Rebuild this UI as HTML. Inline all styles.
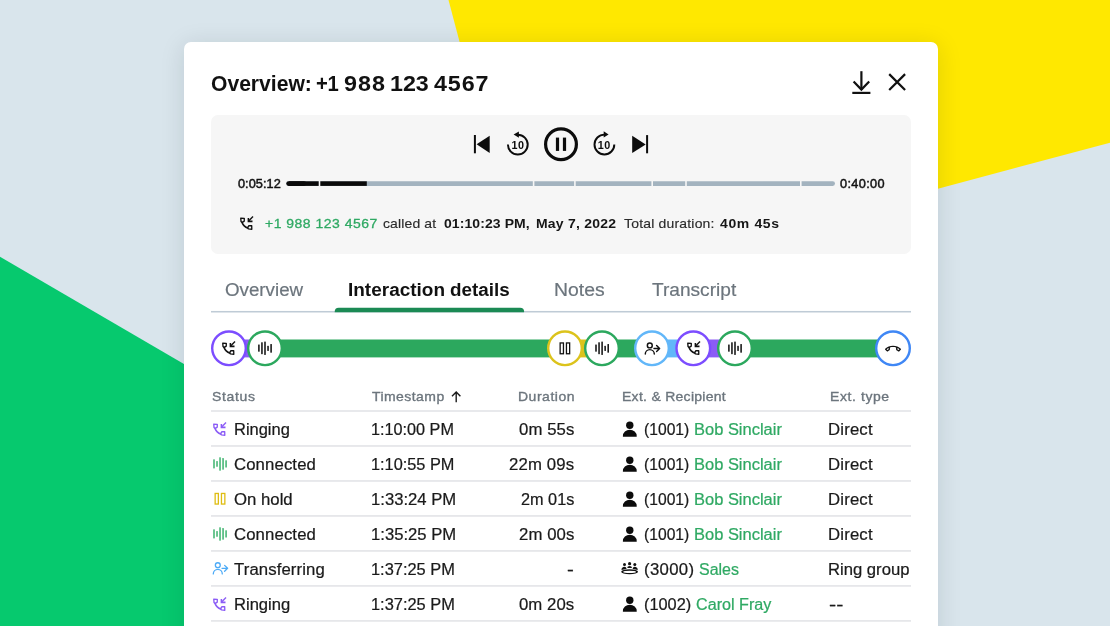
<!DOCTYPE html><html><head><meta charset="utf-8"><title>Overview</title><style>
html,body{margin:0;padding:0}
body{width:1110px;height:626px;overflow:hidden;position:relative;background:#d9e5ec;font-family:'Liberation Sans', sans-serif;}
.a{position:absolute}
.t{position:absolute;white-space:pre;margin:0}
svg{position:absolute;overflow:visible}

</style></head><body><div id="root" style="position:absolute;left:0;top:0;width:1110px;height:626px;will-change:transform">
<svg class="a" style="left:0;top:0" width="1110" height="626" viewBox="0 0 1110 626">
<polygon points="448.5,0 1110,0 1110,142.7 527.4,298.7" fill="#ffe800"/>
<polygon points="0,256.8 640,629.9 640,640 0,640" fill="#06c96e"/>
</svg>
<div class="a" style="left:184px;top:42px;width:754px;height:640px;background:#fff;border-radius:7px;box-shadow:0 3px 24px rgba(10,30,40,0.125)"></div>
<div class="a" style="left:211px;top:115px;width:700px;height:138.7px;background:#f6f6f6;border-radius:7px"></div>
<svg style="left:0;top:0" width="1110" height="626" viewBox="0 0 1110 626" fill="none" stroke="#111" stroke-width="2.2" stroke-linecap="butt" stroke-linejoin="miter">
<path d="M861.4 71.2V89.6"/><path d="M853.6 81.6L861.4 89.6L869.2 81.6"/><path d="M852.3 92.9H870.4"/>
<path d="M889.2 74.1L905.1 90M905.1 74.1L889.2 90"/>
</svg>
<svg style="left:0;top:0" width="1110" height="626" viewBox="0 0 1110 626">
<g fill="#0c0c0c">
<rect x="473.9" y="135" width="2" height="18.3"/>
<polygon points="476.6,144.2 489.7,135.8 489.7,152.9"/>
<polygon points="632.2,135.7 632.2,153.1 645.7,144.4"/>
<rect x="646.1" y="135.1" width="2" height="18.2"/>
<rect x="555.9" y="137.6" width="3.2" height="13.3"/>
<rect x="562.9" y="137.6" width="3.2" height="13.3"/>
<polygon points="513.6,134.6 518.9,131.4 518.9,137.8"/>
<polygon points="608.6,134.4 603.7,131.2 603.7,137.6"/>
</g>
<circle cx="561" cy="144.3" r="15.4" fill="none" stroke="#0c0c0c" stroke-width="3.2"/>
<path d="M517.8 134.7A9.9 9.9 0 1 1 507.9 144.6" fill="none" stroke="#0c0c0c" stroke-width="1.95"/>
<path d="M604.4 134.6A9.9 9.9 0 1 0 614.3 144.5" fill="none" stroke="#0c0c0c" stroke-width="1.95"/>
</svg>
<div class="t" style="left:511.4px;top:138.8px;font-size:10.8px;line-height:12px;font-weight:700;letter-spacing:0.5px;color:#0c0c0c">10</div>
<div class="t" style="left:597.8px;top:138.6px;font-size:10.8px;line-height:12px;font-weight:700;letter-spacing:0.5px;color:#0c0c0c">10</div>
<svg style="left:0;top:0" width="1110" height="626" viewBox="0 0 1110 626"><rect x="286.3" y="181.3" width="548.7" height="4.6" rx="2.3" fill="#a3b3bf"/><rect x="286.3" y="181.3" width="20" height="4.6" rx="2.3" fill="#0a0a0a"/><rect x="289" y="181.3" width="77.8" height="4.6" fill="#0a0a0a"/><rect x="318.7" y="180.8" width="1.6" height="5.6" fill="#f6f6f6"/><rect x="532.8" y="180.8" width="1.6" height="5.6" fill="#f6f6f6"/><rect x="574.1" y="180.8" width="1.6" height="5.6" fill="#f6f6f6"/><rect x="651.4" y="180.8" width="1.6" height="5.6" fill="#f6f6f6"/><rect x="685.2" y="180.8" width="1.6" height="5.6" fill="#f6f6f6"/><rect x="800.0" y="180.8" width="1.6" height="5.6" fill="#f6f6f6"/></svg>
<svg style="left:238.20px;top:216.40px" width="16" height="16" viewBox="0 0 16 16" fill="none" stroke="#111"><path d="M2.75 2.2L6.3 2.3L6.25 5.1L4.7 6.3L3.05 5.6Z" stroke-width="1.35" stroke-linejoin="round"/><path d="M13.8 13.25L13.7 9.7L10.9 9.75L9.7 11.3L10.4 12.95Z" stroke-width="1.35" stroke-linejoin="round"/><path d="M3.7 5.9A11.5 11.5 0 0 0 10.1 12.3" stroke-width="1.5"/><path d="M15 0.55L10.9 4.65" stroke-width="1.4"/><path d="M10.4 1.9V5.35H14.5" stroke-width="1.55"/></svg>
<svg style="left:0;top:0" width="1110" height="626" viewBox="0 0 1110 626"><rect x="211" y="310.95" width="700" height="1.55" fill="#bfcbd6"/><path d="M334.7 312.3V311.700A4 4 0 0 1 338.7 307.700H520.100A4 4 0 0 1 524.100 311.700V312.300Z" fill="#1b8a54"/></svg>
<svg style="left:0;top:0" width="1110" height="626" viewBox="0 0 1110 626"><rect x="229" y="339.5" width="36.5" height="17.9" fill="#8b5cf6"/><rect x="265" y="339.5" width="300.5" height="17.9" fill="#2ca85e"/><rect x="565" y="339.5" width="37.5" height="17.9" fill="#dcc31c"/><rect x="602" y="339.5" width="50.5" height="17.9" fill="#2ca85e"/><rect x="652" y="339.5" width="41.799999999999955" height="17.9" fill="#62b7f9"/><rect x="693.3" y="339.5" width="42.200000000000045" height="17.9" fill="#8b5cf6"/><rect x="735" y="339.5" width="158.5" height="17.9" fill="#2ca85e"/></svg>
<svg style="left:0;top:0" width="1110" height="626" viewBox="0 0 1110 626">
<circle cx="229" cy="348.3" r="16.8" fill="#fff" stroke="#7c4dff" stroke-width="2.4"/>
<circle cx="265" cy="348.3" r="16.8" fill="#fff" stroke="#2ca85e" stroke-width="2.4"/>
<circle cx="565" cy="348.3" r="16.8" fill="#fff" stroke="#dcc31c" stroke-width="2.4"/>
<circle cx="602" cy="348.3" r="16.8" fill="#fff" stroke="#2ca85e" stroke-width="2.4"/>
<circle cx="652" cy="348.3" r="16.8" fill="#fff" stroke="#62b7f9" stroke-width="2.4"/>
<circle cx="693.3" cy="348.3" r="16.8" fill="#fff" stroke="#7c4dff" stroke-width="2.4"/>
<circle cx="735" cy="348.3" r="16.8" fill="#fff" stroke="#2ca85e" stroke-width="2.4"/>
<circle cx="893" cy="348.3" r="16.8" fill="#fff" stroke="#3f87f5" stroke-width="2.4"/>
<rect x="258.10" y="344.40" width="1.6" height="7.35" rx="0.4" fill="#1a1a1a"/><rect x="261.15" y="342.20" width="1.6" height="11.95" rx="0.4" fill="#1a1a1a"/><rect x="264.20" y="341.50" width="1.6" height="13.45" rx="0.4" fill="#1a1a1a"/><rect x="267.25" y="345.75" width="1.6" height="5.25" rx="0.4" fill="#1a1a1a"/><rect x="270.30" y="343.90" width="1.6" height="8.80" rx="0.4" fill="#1a1a1a"/>
<rect x="595.20" y="344.40" width="1.6" height="7.35" rx="0.4" fill="#1a1a1a"/><rect x="598.25" y="342.20" width="1.6" height="11.95" rx="0.4" fill="#1a1a1a"/><rect x="601.30" y="341.50" width="1.6" height="13.45" rx="0.4" fill="#1a1a1a"/><rect x="604.35" y="345.75" width="1.6" height="5.25" rx="0.4" fill="#1a1a1a"/><rect x="607.40" y="343.90" width="1.6" height="8.80" rx="0.4" fill="#1a1a1a"/>
<rect x="728.10" y="344.40" width="1.6" height="7.35" rx="0.4" fill="#1a1a1a"/><rect x="731.15" y="342.20" width="1.6" height="11.95" rx="0.4" fill="#1a1a1a"/><rect x="734.20" y="341.50" width="1.6" height="13.45" rx="0.4" fill="#1a1a1a"/><rect x="737.25" y="345.75" width="1.6" height="5.25" rx="0.4" fill="#1a1a1a"/><rect x="740.30" y="343.90" width="1.6" height="8.80" rx="0.4" fill="#1a1a1a"/>
<g fill="none" stroke="#111" stroke-width="1.3"><rect x="560.15" y="342.95" width="3.3" height="10.8"/><rect x="566.45" y="342.95" width="3.2" height="10.8"/></g>
<g transform="translate(432,-219.8)" fill="none" stroke="#111" stroke-width="1.45" stroke-linecap="round" stroke-linejoin="round"><circle cx="217.8" cy="565.2" r="2.45"/><path d="M213.3 573.9A4.5 4.5 0 0 1 222.3 573.9"/><path d="M222 568.3H227.5M224.6 565.4L227.6 568.3L224.6 571.2"/></g>
</svg>
<svg style="left:220.20px;top:340.80px" width="16" height="16" viewBox="0 0 16 16" fill="none" stroke="#111"><path d="M2.75 2.2L6.3 2.3L6.25 5.1L4.7 6.3L3.05 5.6Z" stroke-width="1.35" stroke-linejoin="round"/><path d="M13.8 13.25L13.7 9.7L10.9 9.75L9.7 11.3L10.4 12.95Z" stroke-width="1.35" stroke-linejoin="round"/><path d="M3.7 5.9A11.5 11.5 0 0 0 10.1 12.3" stroke-width="1.5"/><path d="M15 0.55L10.9 4.65" stroke-width="1.4"/><path d="M10.4 1.9V5.35H14.5" stroke-width="1.55"/></svg>
<svg style="left:684.50px;top:340.80px" width="16" height="16" viewBox="0 0 16 16" fill="none" stroke="#111"><path d="M2.75 2.2L6.3 2.3L6.25 5.1L4.7 6.3L3.05 5.6Z" stroke-width="1.35" stroke-linejoin="round"/><path d="M13.8 13.25L13.7 9.7L10.9 9.75L9.7 11.3L10.4 12.95Z" stroke-width="1.35" stroke-linejoin="round"/><path d="M3.7 5.9A11.5 11.5 0 0 0 10.1 12.3" stroke-width="1.5"/><path d="M15 0.55L10.9 4.65" stroke-width="1.4"/><path d="M10.4 1.9V5.35H14.5" stroke-width="1.55"/></svg>
<svg style="left:885px;top:340.5px" width="16" height="16" viewBox="0 0 24 24"><path d="M18.59 10.52c1.05.51 2.04 1.15 2.96 1.91l-1.07 1.07c-.58-.47-1.21-.89-1.88-1.27v-1.71m-13.2 0v1.7c-.65.37-1.28.79-1.87 1.27l-1.07-1.07c.91-.75 1.9-1.38 2.94-1.9M12 7C7.46 7 3.34 8.78.29 11.67c-.18.18-.29.43-.29.71s.11.53.29.7l2.48 2.48c.18.18.43.29.71.29.27 0 .52-.1.7-.28.79-.73 1.68-1.36 2.66-1.85.33-.16.56-.51.56-.9v-3.1C8.85 9.25 10.4 9 12 9s3.150.25 4.59.73v3.1c0 .4.23.74.56.9.98.49 1.88 1.11 2.67 1.85.18.17.43.28.7.28.28 0 .53-.11.71-.29l2.48-2.48c.18-.18.29-.43.29-.71s-.11-.53-.29-.71C20.66 8.78 16.540 7 12 7z" fill="#111"/></svg>
<svg style="left:0;top:0" width="1110" height="626" viewBox="0 0 1110 626"><rect x="211" y="410.10" width="700" height="1.8" fill="#e6e7ea"/><rect x="211" y="445.08" width="700" height="1.8" fill="#e6e7ea"/><rect x="211" y="480.06" width="700" height="1.8" fill="#e6e7ea"/><rect x="211" y="515.04" width="700" height="1.8" fill="#e6e7ea"/><rect x="211" y="550.02" width="700" height="1.8" fill="#e6e7ea"/><rect x="211" y="585.00" width="700" height="1.8" fill="#e6e7ea"/><rect x="211" y="619.98" width="700" height="1.8" fill="#e6e7ea"/></svg>
<svg style="left:0;top:0" width="1110" height="626" viewBox="0 0 1110 626" fill="none" stroke="#1a1a1a" stroke-width="1.4"><path d="M456.2 402.3V392.3M452 396.3L456.2 392.1L460.4 396.3"/></svg>
<svg style="left:0;top:0" width="1110" height="626" viewBox="0 0 1110 626">
<rect x="213.25" y="459.30" width="1.5" height="9.10" rx="0.4" fill="#3db36e"/><rect x="216.27" y="461.10" width="1.5" height="5.70" rx="0.4" fill="#3db36e"/><rect x="219.29" y="457.20" width="1.5" height="13.50" rx="0.4" fill="#3db36e"/><rect x="222.31" y="458.10" width="1.5" height="11.60" rx="0.4" fill="#3db36e"/><rect x="225.33" y="460.20" width="1.5" height="7.40" rx="0.4" fill="#3db36e"/>
<rect x="213.25" y="529.30" width="1.5" height="9.10" rx="0.4" fill="#3db36e"/><rect x="216.27" y="531.10" width="1.5" height="5.70" rx="0.4" fill="#3db36e"/><rect x="219.29" y="527.20" width="1.5" height="13.50" rx="0.4" fill="#3db36e"/><rect x="222.31" y="528.10" width="1.5" height="11.60" rx="0.4" fill="#3db36e"/><rect x="225.33" y="530.20" width="1.5" height="7.40" rx="0.4" fill="#3db36e"/>
<g fill="none" stroke="#dfbd12" stroke-width="1.3"><rect x="215.15" y="493.45" width="3.2" height="10.6"/><rect x="221.45" y="493.45" width="3.4" height="10.6"/></g>
<g transform="translate(0,0)" fill="none" stroke="#4dabf7" stroke-width="1.3" stroke-linecap="round" stroke-linejoin="round"><circle cx="217.8" cy="565.2" r="2.45"/><path d="M213.3 573.9A4.5 4.5 0 0 1 222.3 573.9"/><path d="M222 568.3H227.5M224.6 565.4L227.6 568.3L224.6 571.2"/></g>
<circle cx="629.8" cy="425.25" r="3.7" fill="#0c0c0c"/><path d="M622.9 436.80V436.10A6.9 6.35 0 0 1 636.7 436.10V436.80Z" fill="#0c0c0c"/>
<circle cx="629.8" cy="460.25" r="3.7" fill="#0c0c0c"/><path d="M622.9 471.80V471.10A6.9 6.35 0 0 1 636.7 471.10V471.80Z" fill="#0c0c0c"/>
<circle cx="629.8" cy="495.25" r="3.7" fill="#0c0c0c"/><path d="M622.9 506.80V506.10A6.9 6.35 0 0 1 636.7 506.10V506.80Z" fill="#0c0c0c"/>
<circle cx="629.8" cy="530.25" r="3.7" fill="#0c0c0c"/><path d="M622.9 541.80V541.10A6.9 6.35 0 0 1 636.7 541.10V541.80Z" fill="#0c0c0c"/>
<circle cx="629.8" cy="600.25" r="3.7" fill="#0c0c0c"/><path d="M622.9 611.80V611.10A6.9 6.35 0 0 1 636.7 611.10V611.80Z" fill="#0c0c0c"/>
<g fill="#111"><circle cx="624.5" cy="564.5" r="1.5"/><circle cx="629.6" cy="563.7" r="1.6"/><circle cx="634.8" cy="564.5" r="1.5"/>
<path d="M621.5 569.6A2.700 2.700 0 0 1 626.4 567.9L626.400 568.9Q623.8 569.1 621.5 570.1Z"/>
<path d="M637.7 569.6A2.700 2.700 0 0 0 632.8 567.9L632.800 568.9Q635.4 569.1 637.7 570.1Z"/>
<path d="M627.2 567.9A2.400 1.9 0 0 1 632 567.9Z"/>
<path fill-rule="evenodd" d="M621.2 571.8A8.4 2.5 0 1 0 638 571.8A8.4 2.5 0 1 0 621.2 571.8ZM623.2 571.9A6.4 1.15 0 1 0 636 571.9A6.4 1.15 0 1 0 623.2 571.9Z"/></g>
</svg>
<svg style="left:211.10px;top:421.80px" width="16" height="16" viewBox="0 0 16 16" fill="none" stroke="#8b5cf6"><path d="M2.75 2.2L6.3 2.3L6.25 5.1L4.7 6.3L3.05 5.6Z" stroke-width="1.35" stroke-linejoin="round"/><path d="M13.8 13.25L13.7 9.7L10.9 9.75L9.7 11.3L10.4 12.95Z" stroke-width="1.35" stroke-linejoin="round"/><path d="M3.7 5.9A11.5 11.5 0 0 0 10.1 12.3" stroke-width="1.5"/><path d="M15 0.55L10.9 4.65" stroke-width="1.4"/><path d="M10.4 1.9V5.35H14.5" stroke-width="1.55"/></svg>
<svg style="left:211.10px;top:596.80px" width="16" height="16" viewBox="0 0 16 16" fill="none" stroke="#8b5cf6"><path d="M2.75 2.2L6.3 2.3L6.25 5.1L4.7 6.3L3.05 5.6Z" stroke-width="1.35" stroke-linejoin="round"/><path d="M13.8 13.25L13.7 9.7L10.9 9.75L9.7 11.3L10.4 12.95Z" stroke-width="1.35" stroke-linejoin="round"/><path d="M3.7 5.9A11.5 11.5 0 0 0 10.1 12.3" stroke-width="1.5"/><path d="M15 0.55L10.9 4.65" stroke-width="1.4"/><path d="M10.4 1.9V5.35H14.5" stroke-width="1.55"/></svg>
<div class="t" style="left:210.75px;top:70.58px;font-size:22px;line-height:26.4px;font-weight:700;color:#111;letter-spacing:0.000px;transform-origin:0 0;transform:scaleX(0.9586);">Overview:</div>
<div class="t" style="left:316.10px;top:70.58px;font-size:22px;line-height:26.4px;font-weight:700;color:#111;letter-spacing:-0.426px;transform-origin:0 0;transform:scaleX(0.92);">+1</div>
<div class="t" style="left:344.19px;top:70.58px;font-size:22px;line-height:26.4px;font-weight:700;color:#111;letter-spacing:1.019px;transform-origin:0 0;transform:scaleX(1.06);">988</div>
<div class="t" style="left:390.38px;top:70.58px;font-size:22px;line-height:26.4px;font-weight:700;color:#111;letter-spacing:0.000px;transform-origin:0 0;transform:scaleX(1.0567);">123</div>
<div class="t" style="left:433.79px;top:70.58px;font-size:22px;line-height:26.4px;font-weight:700;color:#111;letter-spacing:0.799px;transform-origin:0 0;transform:scaleX(1.06);">4567</div>
<div class="t" style="left:237.95px;top:176.64px;font-size:12px;line-height:14.4px;font-weight:400;color:#111;letter-spacing:0.044px;transform-origin:0 0;transform:scaleX(1.06);-webkit-text-stroke:0.45px #111;">0:05:12</div>
<div class="t" style="left:840.15px;top:176.64px;font-size:12px;line-height:14.4px;font-weight:400;color:#111;letter-spacing:0.326px;transform-origin:0 0;transform:scaleX(1.06);-webkit-text-stroke:0.45px #111;">0:40:00</div>
<div class="t" style="left:264.82px;top:215.93px;font-size:13.2px;line-height:15.8px;font-weight:400;color:#2fa963;letter-spacing:0.467px;transform-origin:0 0;transform:scaleX(1.06);-webkit-text-stroke:0.3px #2fa963;">+1 988 123 4567</div>
<div class="t" style="left:383.10px;top:215.93px;font-size:13.2px;line-height:15.8px;font-weight:400;color:#2a2a2a;letter-spacing:0.123px;transform-origin:0 0;transform:scaleX(1.06);-webkit-text-stroke:0.15px #2a2a2a;">called at</div>
<div class="t" style="left:443.99px;top:215.93px;font-size:13.2px;line-height:15.8px;font-weight:700;color:#161616;letter-spacing:0.084px;transform-origin:0 0;transform:scaleX(1.06);">01:10:23 PM,</div>
<div class="t" style="left:536.12px;top:215.93px;font-size:13.2px;line-height:15.8px;font-weight:700;color:#161616;letter-spacing:0.215px;transform-origin:0 0;transform:scaleX(1.06);">May 7, 2022</div>
<div class="t" style="left:623.67px;top:215.93px;font-size:13.2px;line-height:15.8px;font-weight:400;color:#2a2a2a;letter-spacing:0.179px;transform-origin:0 0;transform:scaleX(1.06);-webkit-text-stroke:0.15px #2a2a2a;">Total duration:</div>
<div class="t" style="left:719.50px;top:215.93px;font-size:13.2px;line-height:15.8px;font-weight:700;color:#161616;letter-spacing:0.610px;transform-origin:0 0;transform:scaleX(1.06);">40m 45s</div>
<div class="t" style="left:224.54px;top:278.86px;font-size:18.3px;line-height:22.0px;font-weight:400;color:#6c757d;letter-spacing:0.000px;transform-origin:0 0;transform:scaleX(1.0252);-webkit-text-stroke:0.2px #6c757d;">Overview</div>
<div class="t" style="left:348.06px;top:278.86px;font-size:18.3px;line-height:22.0px;font-weight:700;color:#111;letter-spacing:0.000px;transform-origin:0 0;transform:scaleX(1.0384);">Interaction</div>
<div class="t" style="left:449.51px;top:278.86px;font-size:18.3px;line-height:22.0px;font-weight:700;color:#111;letter-spacing:0.000px;transform-origin:0 0;transform:scaleX(1.0304);">details</div>
<div class="t" style="left:553.97px;top:278.86px;font-size:18.3px;line-height:22.0px;font-weight:400;color:#6c757d;letter-spacing:-0.000px;transform-origin:0 0;transform:scaleX(1.0596);-webkit-text-stroke:0.2px #6c757d;">Notes</div>
<div class="t" style="left:651.61px;top:278.86px;font-size:18.3px;line-height:22.0px;font-weight:400;color:#6c757d;letter-spacing:0.000px;transform-origin:0 0;transform:scaleX(1.045);-webkit-text-stroke:0.2px #6c757d;">Transcript</div>
<div class="t" style="left:211.92px;top:388.78px;font-size:13.2px;line-height:15.8px;font-weight:400;color:#6c757d;letter-spacing:0.616px;transform-origin:0 0;transform:scaleX(1.06);-webkit-text-stroke:0.35px #6c757d;">Status</div>
<div class="t" style="left:372.31px;top:388.78px;font-size:13.2px;line-height:15.8px;font-weight:400;color:#6c757d;letter-spacing:0.425px;transform-origin:0 0;transform:scaleX(1.06);-webkit-text-stroke:0.35px #6c757d;">Timestamp</div>
<div class="t" style="left:518.06px;top:388.78px;font-size:13.2px;line-height:15.8px;font-weight:400;color:#6c757d;letter-spacing:0.494px;transform-origin:0 0;transform:scaleX(1.06);-webkit-text-stroke:0.35px #6c757d;">Duration</div>
<div class="t" style="left:621.76px;top:388.78px;font-size:13.2px;line-height:15.8px;font-weight:400;color:#6c757d;letter-spacing:0.270px;transform-origin:0 0;transform:scaleX(1.06);-webkit-text-stroke:0.35px #6c757d;">Ext. &amp; Recipient</div>
<div class="t" style="left:829.76px;top:388.78px;font-size:13.2px;line-height:15.8px;font-weight:400;color:#6c757d;letter-spacing:0.558px;transform-origin:0 0;transform:scaleX(1.06);-webkit-text-stroke:0.35px #6c757d;">Ext. type</div>
<div class="t" style="left:234.16px;top:420.13px;font-size:15.8px;line-height:19.0px;font-weight:400;color:#1a1a1a;letter-spacing:0.000px;transform-origin:0 0;transform:scaleX(1.0416);-webkit-text-stroke:0.22px #1a1a1a;">Ringing</div>
<div class="t" style="left:370.63px;top:420.13px;font-size:15.8px;line-height:19.0px;font-weight:400;color:#1a1a1a;letter-spacing:0.000px;transform-origin:0 0;transform:scaleX(1.0268);-webkit-text-stroke:0.22px #1a1a1a;">1:10:00 PM</div>
<div class="t" style="left:519.01px;top:420.13px;font-size:15.8px;line-height:19.0px;font-weight:400;color:#1a1a1a;letter-spacing:0.075px;transform-origin:0 0;transform:scaleX(1.06);-webkit-text-stroke:0.22px #1a1a1a;">0m 55s</div>
<div class="t" style="left:644.08px;top:420.13px;font-size:15.8px;line-height:19.0px;font-weight:400;color:#1a1a1a;letter-spacing:0.000px;transform-origin:0 0;transform:scaleX(0.9914);-webkit-text-stroke:0.22px #1a1a1a;">(1001)</div>
<div class="t" style="left:693.85px;top:420.13px;font-size:15.8px;line-height:19.0px;font-weight:400;color:#2fa963;letter-spacing:0.000px;transform-origin:0 0;transform:scaleX(1.0427);-webkit-text-stroke:0.22px #2fa963;">Bob Sinclair</div>
<div class="t" style="left:828.43px;top:420.13px;font-size:15.8px;line-height:19.0px;font-weight:400;color:#1a1a1a;letter-spacing:0.156px;transform-origin:0 0;transform:scaleX(1.06);-webkit-text-stroke:0.22px #1a1a1a;">Direct</div>
<div class="t" style="left:234.17px;top:455.13px;font-size:15.8px;line-height:19.0px;font-weight:400;color:#1a1a1a;letter-spacing:0.103px;transform-origin:0 0;transform:scaleX(1.06);-webkit-text-stroke:0.22px #1a1a1a;">Connected</div>
<div class="t" style="left:370.53px;top:455.13px;font-size:15.8px;line-height:19.0px;font-weight:400;color:#1a1a1a;letter-spacing:0.000px;transform-origin:0 0;transform:scaleX(1.0319);-webkit-text-stroke:0.22px #1a1a1a;">1:10:55 PM</div>
<div class="t" style="left:509.19px;top:455.13px;font-size:15.8px;line-height:19.0px;font-weight:400;color:#1a1a1a;letter-spacing:0.138px;transform-origin:0 0;transform:scaleX(1.06);-webkit-text-stroke:0.22px #1a1a1a;">22m 09s</div>
<div class="t" style="left:644.08px;top:455.13px;font-size:15.8px;line-height:19.0px;font-weight:400;color:#1a1a1a;letter-spacing:0.000px;transform-origin:0 0;transform:scaleX(0.9914);-webkit-text-stroke:0.22px #1a1a1a;">(1001)</div>
<div class="t" style="left:693.85px;top:455.13px;font-size:15.8px;line-height:19.0px;font-weight:400;color:#2fa963;letter-spacing:0.000px;transform-origin:0 0;transform:scaleX(1.0427);-webkit-text-stroke:0.22px #2fa963;">Bob Sinclair</div>
<div class="t" style="left:828.43px;top:455.13px;font-size:15.8px;line-height:19.0px;font-weight:400;color:#1a1a1a;letter-spacing:0.156px;transform-origin:0 0;transform:scaleX(1.06);-webkit-text-stroke:0.22px #1a1a1a;">Direct</div>
<div class="t" style="left:234.19px;top:490.13px;font-size:15.8px;line-height:19.0px;font-weight:400;color:#1a1a1a;letter-spacing:0.002px;transform-origin:0 0;transform:scaleX(1.06);-webkit-text-stroke:0.22px #1a1a1a;">On hold</div>
<div class="t" style="left:370.50px;top:490.13px;font-size:15.8px;line-height:19.0px;font-weight:400;color:#1a1a1a;letter-spacing:0.000px;transform-origin:0 0;transform:scaleX(1.0536);-webkit-text-stroke:0.22px #1a1a1a;">1:33:24 PM</div>
<div class="t" style="left:521.01px;top:490.13px;font-size:15.8px;line-height:19.0px;font-weight:400;color:#1a1a1a;letter-spacing:0.000px;transform-origin:0 0;transform:scaleX(1.0291);-webkit-text-stroke:0.22px #1a1a1a;">2m 01s</div>
<div class="t" style="left:644.08px;top:490.13px;font-size:15.8px;line-height:19.0px;font-weight:400;color:#1a1a1a;letter-spacing:0.000px;transform-origin:0 0;transform:scaleX(0.9914);-webkit-text-stroke:0.22px #1a1a1a;">(1001)</div>
<div class="t" style="left:693.85px;top:490.13px;font-size:15.8px;line-height:19.0px;font-weight:400;color:#2fa963;letter-spacing:0.000px;transform-origin:0 0;transform:scaleX(1.0427);-webkit-text-stroke:0.22px #2fa963;">Bob Sinclair</div>
<div class="t" style="left:828.43px;top:490.13px;font-size:15.8px;line-height:19.0px;font-weight:400;color:#1a1a1a;letter-spacing:0.156px;transform-origin:0 0;transform:scaleX(1.06);-webkit-text-stroke:0.22px #1a1a1a;">Direct</div>
<div class="t" style="left:234.17px;top:525.13px;font-size:15.8px;line-height:19.0px;font-weight:400;color:#1a1a1a;letter-spacing:0.103px;transform-origin:0 0;transform:scaleX(1.06);-webkit-text-stroke:0.22px #1a1a1a;">Connected</div>
<div class="t" style="left:370.50px;top:525.13px;font-size:15.8px;line-height:19.0px;font-weight:400;color:#1a1a1a;letter-spacing:0.000px;transform-origin:0 0;transform:scaleX(1.0536);-webkit-text-stroke:0.22px #1a1a1a;">1:35:25 PM</div>
<div class="t" style="left:518.99px;top:525.13px;font-size:15.8px;line-height:19.0px;font-weight:400;color:#1a1a1a;letter-spacing:0.081px;transform-origin:0 0;transform:scaleX(1.06);-webkit-text-stroke:0.22px #1a1a1a;">2m 00s</div>
<div class="t" style="left:644.08px;top:525.13px;font-size:15.8px;line-height:19.0px;font-weight:400;color:#1a1a1a;letter-spacing:0.000px;transform-origin:0 0;transform:scaleX(0.9914);-webkit-text-stroke:0.22px #1a1a1a;">(1001)</div>
<div class="t" style="left:693.85px;top:525.13px;font-size:15.8px;line-height:19.0px;font-weight:400;color:#2fa963;letter-spacing:0.000px;transform-origin:0 0;transform:scaleX(1.0427);-webkit-text-stroke:0.22px #2fa963;">Bob Sinclair</div>
<div class="t" style="left:828.43px;top:525.13px;font-size:15.8px;line-height:19.0px;font-weight:400;color:#1a1a1a;letter-spacing:0.156px;transform-origin:0 0;transform:scaleX(1.06);-webkit-text-stroke:0.22px #1a1a1a;">Direct</div>
<div class="t" style="left:233.85px;top:560.13px;font-size:15.8px;line-height:19.0px;font-weight:400;color:#1a1a1a;letter-spacing:0.092px;transform-origin:0 0;transform:scaleX(1.06);-webkit-text-stroke:0.22px #1a1a1a;">Transferring</div>
<div class="t" style="left:370.52px;top:560.13px;font-size:15.8px;line-height:19.0px;font-weight:400;color:#1a1a1a;letter-spacing:0.000px;transform-origin:0 0;transform:scaleX(1.0383);-webkit-text-stroke:0.22px #1a1a1a;">1:37:25 PM</div>
<div class="t" style="left:567.32px;top:560.13px;font-size:15.8px;line-height:19.0px;font-weight:400;color:#1a1a1a;letter-spacing:0.000px;transform-origin:0 0;transform:scaleX(1.2921);-webkit-text-stroke:0.22px #1a1a1a;">-</div>
<div class="t" style="left:644.02px;top:560.13px;font-size:15.8px;line-height:19.0px;font-weight:400;color:#1a1a1a;letter-spacing:0.317px;transform-origin:0 0;transform:scaleX(1.06);-webkit-text-stroke:0.22px #1a1a1a;">(3000)</div>
<div class="t" style="left:699.43px;top:560.13px;font-size:15.8px;line-height:19.0px;font-weight:400;color:#2fa963;letter-spacing:0.000px;transform-origin:0 0;transform:scaleX(1.0114);-webkit-text-stroke:0.22px #2fa963;">Sales</div>
<div class="t" style="left:828.14px;top:560.13px;font-size:15.8px;line-height:19.0px;font-weight:400;color:#1a1a1a;letter-spacing:0.000px;transform-origin:0 0;transform:scaleX(1.0539);-webkit-text-stroke:0.22px #1a1a1a;">Ring group</div>
<div class="t" style="left:234.05px;top:595.13px;font-size:15.8px;line-height:19.0px;font-weight:400;color:#1a1a1a;letter-spacing:0.000px;transform-origin:0 0;transform:scaleX(1.0494);-webkit-text-stroke:0.22px #1a1a1a;">Ringing</div>
<div class="t" style="left:370.52px;top:595.13px;font-size:15.8px;line-height:19.0px;font-weight:400;color:#1a1a1a;letter-spacing:0.000px;transform-origin:0 0;transform:scaleX(1.0383);-webkit-text-stroke:0.22px #1a1a1a;">1:37:25 PM</div>
<div class="t" style="left:519.11px;top:595.13px;font-size:15.8px;line-height:19.0px;font-weight:400;color:#1a1a1a;letter-spacing:0.056px;transform-origin:0 0;transform:scaleX(1.06);-webkit-text-stroke:0.22px #1a1a1a;">0m 20s</div>
<div class="t" style="left:644.04px;top:595.13px;font-size:15.8px;line-height:19.0px;font-weight:400;color:#1a1a1a;letter-spacing:0.000px;transform-origin:0 0;transform:scaleX(1.0346);-webkit-text-stroke:0.22px #1a1a1a;">(1002)</div>
<div class="t" style="left:696.10px;top:595.13px;font-size:15.8px;line-height:19.0px;font-weight:400;color:#2fa963;letter-spacing:0.000px;transform-origin:0 0;transform:scaleX(1.0229);-webkit-text-stroke:0.22px #2fa963;">Carol Fray</div>
<div class="t" style="left:829.18px;top:595.13px;font-size:15.8px;line-height:19.0px;font-weight:400;color:#1a1a1a;letter-spacing:0.000px;transform-origin:0 0;transform:scaleX(1.3609);-webkit-text-stroke:0.22px #1a1a1a;">--</div>
</div></body></html>
